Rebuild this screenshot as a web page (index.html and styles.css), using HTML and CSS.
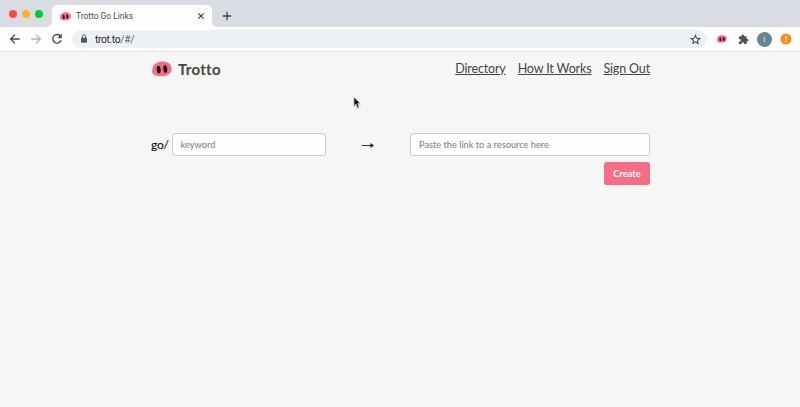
FILE: index.html
```html
<!DOCTYPE html>
<html lang="en">
<head>
<meta charset="utf-8">
<title>Trotto Go Links</title>
<link rel="stylesheet" href="styles.css">
</head>
<body>
<svg class="defs" width="0" height="0" aria-hidden="true">
  <symbol id="snout" viewBox="0 0 20 16">
    <path d="M6 1.200C9 0 14 0 17 2.200c3 2.500 3.400 7.200 1.200 9.800-2 2.500-5.200 3-8.200 3-3.500 0-7 .1-8.700-1.700C-.5 11.500 0 8.500.9 6 1.800 3.300 3.600 2 6 1.200z" fill="#fb6a82"/>
    <ellipse cx="6.700" cy="8.600" rx="1.900" ry="3.900" fill="#111" transform="rotate(-5 6.700 8.600)"/>
    <ellipse cx="13.300" cy="8" rx="1.900" ry="3.900" fill="#111" transform="rotate(-8 13.300 8)"/>
  </symbol>
</svg>
<header class="browser">
  <div class="tabs">
    <div class="lights"><i class="red"></i><i class="yellow"></i><i class="green"></i></div>
    <div class="tab">
      <svg class="favicon"><use href="#snout"/></svg>
      <span class="tab-title">Trotto Go Links</span>
      <svg class="close" viewBox="0 0 8 8"><path d="M1.300 1.300l5.400 5.400M6.700 1.300L1.300 6.700"/></svg>
    </div>
    <svg class="plus" viewBox="0 0 10 10"><path d="M5 .8v8.400M.8 5h8.400"/></svg>
  </div>
  <div class="toolbar">
    <svg class="nav-icon" viewBox="0 0 12 12"><path d="M10.700 6H1.800M6 1.600L1.600 6 6 10.400"/></svg>
    <svg class="nav-icon faded" viewBox="0 0 12 12"><path d="M1.300 6h8.900M6 1.600L10.400 6 6 10.400"/></svg>
    <svg class="nav-icon reload" viewBox="0 0 12 12"><path d="M9.500 3.200A4.300 4.300 0 1 0 10.100 7.300"/><path class="solid" d="M10.800.8v4.500H6.300z"/></svg>
    <div class="address">
      <svg class="lock" viewBox="0 0 8 10"><rect x="1" y="3.700" width="6" height="5" rx=".6"/><path d="M2.300 4V2.600a1.700 1.700 0 0 1 3.400 0V4"/></svg>
      <span class="url">trot.to<span>/#/</span></span>
      <svg class="star" viewBox="0 0 24 24"><path d="M12 3l2.700 6.200 6.700.6-5.100 4.400 1.500 6.600L12 17.300l-5.800 3.500 1.500-6.600-5.100-4.400 6.700-.6z"/></svg>
    </div>
    <svg class="ext"><use href="#snout"/></svg>
    <svg class="puzzle" viewBox="0 0 24 24"><path d="M20.500 11H19V7a2 2 0 0 0-2-2h-4V3.500a2.500 2.500 0 0 0-5 0V5H4a2 2 0 0 0-2 2v3.800h1.500a2.700 2.700 0 0 1 0 5.400H2V20a2 2 0 0 0 2 2h3.800v-1.500a2.700 2.700 0 0 1 5.400 0V22H17a2 2 0 0 0 2-2v-4h1.500a2.500 2.500 0 0 0 0-5z"/></svg>
    <span class="avatar">I</span>
    <svg class="alert" viewBox="0 0 12 12"><circle cx="6" cy="6" r="5.500"/><path d="M6 2.900v3.500M6 7.800v1.400"/></svg>
  </div>
</header>
<main class="page">
  <div class="masthead">
    <svg class="logo"><use href="#snout"/></svg>
    <span class="brand">Trotto</span>
    <nav><a href="#">Directory</a><a href="#">How It Works</a><a href="#">Sign Out</a></nav>
  </div>
  <form class="link-form">
    <label for="keyword">go/</label>
    <input id="keyword" class="keyword" type="text" placeholder="keyword">
    <svg class="arrow" viewBox="0 0 12 8"><path class="shaft" d="M0 3.500h10"/><path d="M8.500 1L12 3.500 8.500 6z"/></svg>
    <input class="destination" type="text" placeholder="Paste the link to a resource here" aria-label="Destination">
  </form>
  <div class="actions"><button type="button">Create</button></div>
</main>
<svg class="cursor" viewBox="0 0 10 14"><path d="M1 1v10l2.300-2.100 1.600 3.800 1.900-.8-1.600-3.700h3.200z"/></svg>
</body>
</html>
```
FILE: styles.css
```css
* { box-sizing: border-box; }
body {
  margin: 0;
  height: 407px;
  overflow: hidden;
  background: #f6f6f5;
  color: #111;
  font-family: Lato, sans-serif;
}
svg { display: block; flex: none; }
.defs { position: absolute; }
.browser { font-family: Roboto, sans-serif; }
.tabs {
  display: flex;
  height: 27px;
  padding-left: 9px;
  background: #dadce4;
}
.lights { display: flex; gap: 5.200px; width: 43px; padding-top: 9.500px; }
.lights i { width: 8px; height: 8px; border-radius: 50%; }
.red { background: #fc4948; }
.yellow { background: #fdb02b; }
.green { background: #05c83b; }
.tab {
  position: relative;
  display: flex;
  align-items: center;
  width: 160px;
  height: 22px;
  margin-top: 5px;
  padding: 0 7px 0 8px;
  border-radius: 5px 5px 0 0;
  background: #fefefe;
}
.tab::before, .tab::after {
  content: "";
  position: absolute;
  bottom: 0;
  width: 5px;
  height: 5px;
}
.tab::before { left: -5px; background: radial-gradient(circle at 0 0, transparent 4.500px, #fefefe 5px); }
.tab::after { right: -5px; background: radial-gradient(circle at 100% 0, transparent 4.500px, #fefefe 5px); }
.favicon { width: 11px; height: 9px; }
.tab-title { margin-left: 5px; color: #45484c; font-size: 8.300px; letter-spacing: .05px; }
.close { width: 8px; height: 8px; margin-left: auto; fill: none; stroke: #3c4043; stroke-width: 1.200; }
.plus { width: 10px; height: 10px; margin: 11px 0 0 9.500px; fill: none; stroke: #3c4043; stroke-width: 1.300; }
.toolbar {
  display: flex;
  align-items: center;
  height: 25px;
  padding: 0 8px 0 9px;
  border-bottom: 1px solid #dfe1e3;
  background: #fefefe;
}
.nav-icon { width: 12px; height: 12px; margin-right: 9.300px; fill: none; stroke: #44474a; stroke-width: 1.300; }
.nav-icon .solid { fill: #44474a; stroke: none; }
.nav-icon.faded { stroke: #aeb0b3; }
.reload { margin: 0 10px 0 -.7px; }
.address {
  display: flex;
  align-items: center;
  width: 635px;
  height: 18px;
  margin-left: -1px;
  padding: 0 6px 0 8px;
  border-radius: 9px;
  background: #eef1f4;
}
.lock { width: 8px; height: 10px; fill: #55585c; }
.lock path { fill: none; stroke: #55585c; stroke-width: 1; }
.url { margin-left: 7px; color: #25282b; font-size: 10.300px; letter-spacing: -.35px; }
.url span { color: #606469; }
.star { width: 11px; height: 11px; margin-left: auto; fill: none; stroke: #44474a; stroke-width: 2.200; }
.ext { width: 10px; height: 8px; margin-left: 10px; }
.puzzle { width: 11px; height: 11px; margin-left: 11px; fill: #505356; }
.avatar {
  width: 15px;
  height: 15px;
  margin-left: 8px;
  border-radius: 50%;
  background: #688491;
  color: #e4ecef;
  font-size: 8px;
  line-height: 15px;
  text-align: center;
}
.alert { width: 12px; height: 12px; margin-left: 8px; fill: #fb8c14; }
.alert path { stroke: #fff; stroke-width: 1.400; }
.page { width: 500px; margin-left: 150px; }
.masthead { display: flex; align-items: center; height: 34px; padding-left: 2px; }
.logo { width: 20px; height: 16px; }
.brand { margin-left: 6px; color: #454545; font-size: 15px; font-weight: 700; letter-spacing: .3px; }
nav { display: flex; gap: 12px; margin: 0 0 1px auto; }
nav a { color: #454545; font-size: 12.500px; letter-spacing: -.15px; text-decoration: underline; text-underline-offset: 1px; }
.link-form { display: flex; align-items: center; height: 23px; margin-top: 47px; }
label { width: 22px; padding-left: 1px; font-size: 12px; font-weight: 500; letter-spacing: -.2px; }
input {
  height: 23px;
  padding: 0 8px;
  border: 1px solid #cbccd2;
  border-radius: 3px;
  background: #fefefe;
  font: 500 9.300px Lato, sans-serif;
  letter-spacing: -.04px;
}
input::placeholder { color: #858585; opacity: 1; }
.keyword { width: 154px; padding-left: 7.500px; }
.arrow { width: 12px; height: 8px; margin: 2px 36px 0; fill: #111; }
.shaft { stroke: #333; stroke-width: 1; }
.destination { width: 240px; margin-left: auto; }
.actions { display: flex; justify-content: flex-end; margin-top: 6px; }
button {
  width: 46px;
  height: 23px;
  padding: 0;
  border: 0;
  border-radius: 2.500px;
  background: #f76d85;
  color: #fff;
  font: 700 9.300px Lato, sans-serif;
}
.cursor {
  position: absolute;
  left: 353px;
  top: 96px;
  width: 9px;
  height: 13px;
  fill: #111;
  stroke: #fff;
  stroke-width: .7;
  filter: drop-shadow(0 1px .5px #0004);
}
```
